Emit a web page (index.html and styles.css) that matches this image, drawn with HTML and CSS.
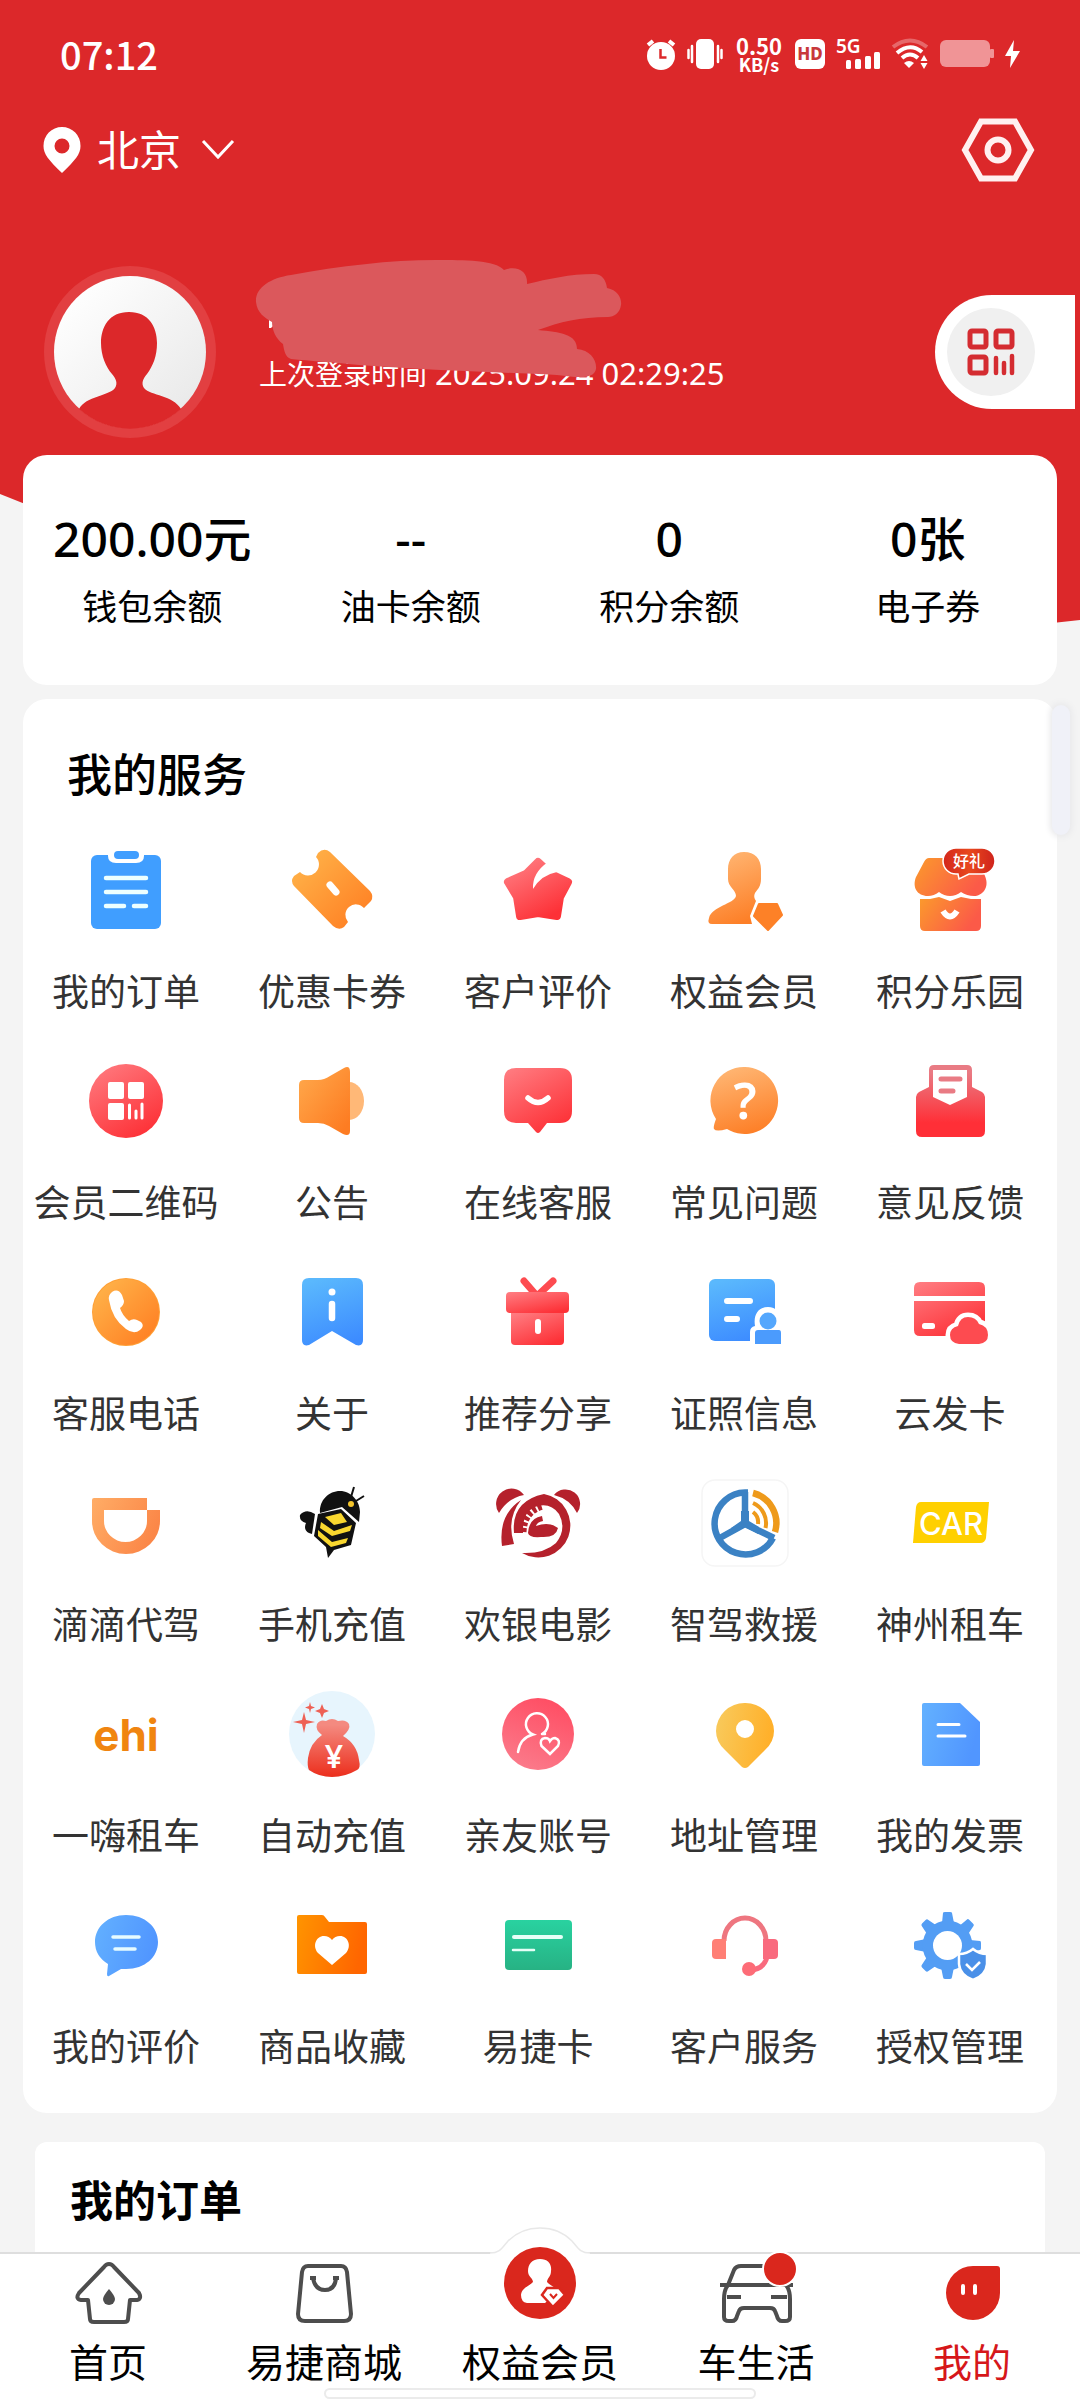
FILE: index.html
```html
<!DOCTYPE html>
<html lang="zh-CN">
<head>
    <meta charset="UTF-8">
    <meta name="viewport" content="width=device-width, initial-scale=1.0">
    <title>我的</title>
    <link rel="stylesheet" href="styles.css">
</head>
<body>
    <!-- Shared gradients for the icons -->
    <svg class="defs" width="0" height="0" aria-hidden="true">
        <defs>
            <linearGradient id="orange" x1="0" y1="0" x2="1" y2="1"><stop offset="0" stop-color="#ffb84d"/><stop offset="1" stop-color="#ff7a1f"/></linearGradient>
            <linearGradient id="peach" x1="0.3" y1="0" x2="0.6" y2="1"><stop offset="0" stop-color="#ffb673"/><stop offset="1" stop-color="#fd7f27"/></linearGradient>
            <linearGradient id="speaker" x1="0" y1="0.2" x2="0.8" y2="1"><stop offset="0" stop-color="#ffa548"/><stop offset="1" stop-color="#fd7c22"/></linearGradient>
            <linearGradient id="red" x1="0.1" y1="0" x2="0.7" y2="1"><stop offset="0" stop-color="#ff7b80"/><stop offset="1" stop-color="#fd3137"/></linearGradient>
            <linearGradient id="shop" x1="0" y1="0" x2="1" y2="0.4"><stop offset="0" stop-color="#fb9a2c"/><stop offset="1" stop-color="#fb5a48"/></linearGradient>
            <linearGradient id="mail" x1="0" y1="0" x2="0" y2="1"><stop offset="0.1" stop-color="#e97b84"/><stop offset="0.8" stop-color="#ff2f37"/></linearGradient>
            <linearGradient id="sky" x1="0.3" y1="0" x2="0.6" y2="1"><stop offset="0" stop-color="#5ab8fd"/><stop offset="1" stop-color="#3d8cff"/></linearGradient>
            <linearGradient id="blue" x1="0" y1="0" x2="1" y2="0.3"><stop offset="0" stop-color="#63b1ff"/><stop offset="1" stop-color="#5196ff"/></linearGradient>
            <linearGradient id="didi" x1="0" y1="0" x2="1" y2="0.4"><stop offset="0" stop-color="#ffad66"/><stop offset="1" stop-color="#fb8748"/></linearGradient>
            <linearGradient id="money" x1="0" y1="0" x2="0" y2="1"><stop offset="0.1" stop-color="#f48a80"/><stop offset="1" stop-color="#ec2e1c"/></linearGradient>
            <linearGradient id="pink" x1="0.7" y1="0" x2="0.3" y2="1"><stop offset="0" stop-color="#ff4d63"/><stop offset="1" stop-color="#fb7b8b"/></linearGradient>
            <linearGradient id="gold" x1="0" y1="0" x2="1" y2="0.2"><stop offset="0" stop-color="#f8cb5e"/><stop offset="1" stop-color="#ffb02a"/></linearGradient>
            <linearGradient id="folder" x1="0" y1="0" x2="1" y2="0.2"><stop offset="0" stop-color="#ff9400"/><stop offset="1" stop-color="#ff6600"/></linearGradient>
            <linearGradient id="green" x1="0" y1="0" x2="0" y2="1"><stop offset="0" stop-color="#29d2a0"/><stop offset="1" stop-color="#27b284"/></linearGradient>
            <linearGradient id="badge" x1="0" y1="0" x2="1" y2="0"><stop offset="0" stop-color="#d3261c"/><stop offset="0.5" stop-color="#e8481d"/><stop offset="1" stop-color="#cf231c"/></linearGradient>
            <linearGradient id="avatar" x1="0" y1="0" x2="1" y2="1"><stop offset="0.1" stop-color="#ffffff"/><stop offset="0.9" stop-color="#e9e9e9"/></linearGradient>
        </defs>
    </svg>

    <div class="app">
        <main class="content">
            <header class="hero">
                <div class="status-bar">
                    <span class="time">07:12</span>
                    <div class="status-icons">
                        <svg width="30" height="32" viewBox="0 0 30 32" fill="#fff"><circle cx="15" cy="18" r="14"/><path d="M2 7 7 3M28 7 23 3" stroke="#fff" stroke-width="4"/><path d="M14.500 11v8.500h6" fill="none" stroke="#dc282a" stroke-width="2.500"/></svg>
                        <svg width="36" height="32" viewBox="0 0 36 32" fill="#fff"><rect x="9" y="1" width="18" height="30" rx="5"/><path d="M5 8v16M31 8v16M1.500 12v8M34.500 12v8" stroke="#fff" stroke-width="2.500" stroke-linecap="round"/></svg>
                        <span class="net-speed"><span>0.50</span><small>KB/s</small></span>
                        <svg width="30" height="30" viewBox="0 0 30 30"><rect width="30" height="30" rx="6" fill="#fff"/><text class="hd" x="15" y="21" text-anchor="middle">HD</text></svg>
                        <svg width="44" height="32" viewBox="0 0 44 32" fill="#fff"><text class="net-type" x="0" y="15">5G</text><rect x="10" y="22" width="5" height="9" rx="1.500"/><rect x="19" y="21" width="6" height="10" rx="1.500"/><rect x="29" y="18" width="6" height="13" rx="1.500"/><rect x="38" y="14" width="6" height="17" rx="1.500"/></svg>
                        <svg width="38" height="32" viewBox="0 0 38 32" fill="none" stroke="#fff" stroke-width="4"><path d="M2 9Q19-4 36 9" opacity="0.300"/><path d="M6 15Q19 4 31 14M11 20Q19 13 27 20"/><path d="M13 25Q18 21 23 25L18 30Z" fill="#fff" stroke="none"/><path d="M33 17l3.500 6h-7ZM33 31l3.500-6h-7Z" fill="#fff" stroke="none"/></svg>
                        <svg width="54" height="28" viewBox="0 0 54 28" fill="#f09496"><rect width="50" height="27" rx="6"/><rect x="50" y="9" width="4" height="9" rx="1"/></svg>
                        <svg width="15" height="28" viewBox="0 0 15 28" fill="#fff"><path d="M9 0 0 16h6L5 28 15 11H8Z"/></svg>
                    </div>
                </div>

                <div class="location-bar">
                    <button class="city" type="button">
                        <svg width="38" height="48" viewBox="0 0 38 48"><path fill="#fff" fill-rule="evenodd" d="M19 1a18.500 18.500 0 0 1 18.500 19c0 8-5 14-18.500 27C5.500 34 .500 28 .500 20A18.500 18.500 0 0 1 19 1Zm0 11.500a7.500 7.500 0 1 0 0 15 7.500 7.500 0 0 0 0-15Z"/></svg>
                        <span>北京</span>
                        <svg width="34" height="22" viewBox="0 0 34 22"><path d="M2 2 17 18 32 2" fill="none" stroke="#fff" stroke-width="3"/></svg>
                    </button>
                    <button class="settings" type="button" aria-label="设置">
                        <svg width="74" height="66" viewBox="0 0 74 66" fill="none" stroke="#fff0f0" stroke-width="6"><path d="M20 4.500H54L70 33 54 61.500H20L4 33Z"/><circle cx="37" cy="33" r="10.500"/></svg>
                    </button>
                </div>

                <div class="profile">
                    <svg class="avatar" width="174" height="174" viewBox="0 0 174 174">
                        <circle cx="87" cy="87" r="86" fill="#e23f41"/>
                        <circle cx="87" cy="87" r="76" fill="url(#avatar)"/>
                        <path fill="#dc282a" d="M86 47C66 47 58 62 58 78c0 13 5 24 11 31 4 5 6 9 3 14-6 8-29 8-36 21A76 76 0 0 0 138 144c-8-14-30-13-37-21-3-5-1-9 3-14 6-8 10-18 10-31 0-16-8-31-28-31Z"/>
                    </svg>
                    <div class="login-info">
                        <p class="last-login"><span>上次登录时间</span><time>2025.09.24 02:29:25</time></p>
                        <svg class="name-mask" width="366" height="120" viewBox="256 258 366 120">
                            <path fill="#fff" d="M269 318h3l2 5-3 3h-2Z"/>
                            <path fill="#db585c" d="M256 300C255 286 270 276 291 273C340 264 390 258 436 258C465 258 495 258 504 268C518 263 528 270 527 282C548 277 570 272 594 272C602 272 606 278 607 286C618 288 622 297 621 303C620 311 614 315 608 315C580 315 560 320 538 328C560 330 577 332 577 347C590 348 597 358 596 367C594 377 580 376 557 373C500 370 440 369 359 363C330 360 310 359 291 357C285 355 284 348 283 342C276 337 272 328 272 320C265 316 257 311 256 300Z"/>
                        </svg>
                    </div>
                    <button class="qr-button" type="button" aria-label="二维码">
                        <span class="qr-circle">
                            <svg width="48" height="48" viewBox="0 0 48 48" fill="none" stroke="#d42c31" stroke-width="5"><rect x="3" y="3" width="16" height="16" rx="2"/><rect x="29" y="3" width="16" height="16" rx="2"/><rect x="3" y="29" width="16" height="16" rx="2"/><path d="M29 30v15M37 35v10M45 28v17" stroke-linecap="round" stroke-width="4.500"/></svg>
                        </span>
                    </button>
                </div>
            </header>

            <section class="card assets">
                <a href="#"><strong>200.00元</strong><span>钱包余额</span></a>
                <a href="#"><strong>--</strong><span>油卡余额</span></a>
                <a href="#"><strong>0</strong><span>积分余额</span></a>
                <a href="#"><strong>0张</strong><span>电子券</span></a>
            </section>

            <section class="card services">
                <h2>我的服务</h2>
                <div class="service-grid">
                    <a href="#" class="service">
                        <svg viewBox="0 0 96 96"><rect x="13" y="13" width="70" height="74" rx="6" fill="#409eff"/><path d="M30 10v4q0 7 8 7h20q8 0 8-7v-4Z" fill="#fff"/><rect x="36" y="9" width="25" height="8" rx="4" fill="#409eff"/><path d="M28 36H68M28 50H68M28 64H46M56 64H68" stroke="#ecffff" stroke-width="4.500" stroke-linecap="round"/></svg>
                        <span>我的订单</span>
                    </a>
                    <a href="#" class="service">
                        <svg viewBox="0 0 96 96"><path fill="url(#orange)" d="M34 11Q40 5 46 10L86 49Q90 54 87 59L80 66A10.500 10.500 0 0 0 64 80L60 85Q55 89 49 84L10 44Q6 39 10 34L16 30A10.500 10.500 0 1 0 32 15Z"/><path d="M46 43l6 7" stroke="#fff" stroke-width="7" stroke-linecap="round"/></svg>
                        <span>优惠卡券</span>
                    </a>
                    <a href="#" class="service">
                        <svg viewBox="0 0 96 96"><path fill="url(#red)" stroke="url(#red)" stroke-width="8" stroke-linejoin="round" d="M48 20 61 32 78 40 70 55 67 74 48 71 30 74 27 55 18 40 36 32Z"/><path fill="#fff" d="M58 20 67 30Q51 33 43 47Q42 31 58 20Z"/></svg>
                        <span>客户评价</span>
                    </a>
                    <a href="#" class="service">
                        <svg viewBox="0 0 96 96"><path fill="url(#peach)" d="M48 10c11 0 17 7 17 17v10c0 7-3 10-6 14q-2 4 1 8l-6 15 2 8H16q-5 0-3-6c3-12 25-14 27-22 0-6-8-9-8-17V27c0-10 6-17 16-17Z"/><path fill="#fd8127" stroke="#fd8127" stroke-width="2" stroke-linejoin="round" d="M63 62H81L86 73 72 88 58 74Z"/></svg>
                        <span>权益会员</span>
                    </a>
                    <a href="#" class="service">
                        <svg viewBox="0 0 96 96"><path fill="url(#shop)" d="M27 16H72Q75 16 77 19L83 34C88 46 80 54 72 54Q65 54 59 50 54 54 48 54 42 54 37 50 32 54 26 54C15 54 10 45 14 35L22 20Q24 16 27 16Z"/><path fill="url(#shop)" d="M18 57h10l9-2 11 4 11-4 10 2h10v27q0 5-5 5H23q-5 0-5-5Z"/><path d="M41 69q7 11 14 0" fill="none" stroke="#fff" stroke-width="6"/><path fill="url(#badge)" stroke="#fff" stroke-width="1.500" d="M54 6H80A12 12 0 0 1 80 32H67L57 37 56 32H54A12 12 0 0 1 54 6Z"/><text class="gift-text" x="67" y="25" text-anchor="middle">好礼</text></svg>
                        <span>积分乐园</span>
                    </a>

                    <a href="#" class="service">
                        <svg viewBox="0 0 96 96"><circle cx="48" cy="48" r="37" fill="url(#red)"/><g fill="#fff"><rect x="30" y="29" width="16" height="17" rx="2"/><rect x="50" y="29" width="16" height="17" rx="2"/><rect x="30" y="50" width="16" height="17" rx="2"/></g><path d="M51.500 52v13M58 58v7M64 51v14" stroke="#fff" stroke-width="3" stroke-linecap="round"/></svg>
                        <span>会员二维码</span>
                    </a>
                    <a href="#" class="service">
                        <svg viewBox="0 0 96 96"><ellipse cx="65" cy="48" rx="15" ry="19" fill="#ffb877"/><path fill="url(#speaker)" d="M20 27H34Q40 27 46 23L60 15Q66 12 66 19V78Q66 84 59 81L45 73Q40 70 34 70H20Q15 70 15 65V32Q15 27 20 27Z"/></svg>
                        <span>公告</span>
                    </a>
                    <a href="#" class="service">
                        <svg viewBox="0 0 96 96"><path fill="url(#red)" d="M26 15H70Q82 15 82 27V58Q82 70 70 70H57L50 79Q48 81 46 79L38 70H26Q14 70 14 58V27Q14 15 26 15Z"/><path d="M38 45q10 9 20 0" fill="none" stroke="#fff" stroke-width="5.500" stroke-linecap="round"/></svg>
                        <span>在线客服</span>
                    </a>
                    <a href="#" class="service">
                        <svg viewBox="0 0 96 96"><path fill="url(#peach)" d="M49 14A33.500 33.500 0 1 1 31 76Q20 79 18 76 17 74 20 66A33.500 33.500 0 0 1 49 14Z"/><text class="question" x="49" y="66" text-anchor="middle">?</text></svg>
                        <span>常见问题</span>
                    </a>
                    <a href="#" class="service">
                        <svg viewBox="0 0 96 96"><path fill="url(#mail)" d="M32 12H65Q70 12 70 17V34L80 39Q83 41 83 44V78Q83 84 77 84H20Q14 84 14 78V44Q14 41 17 39L27 34V17Q27 12 32 12Z"/><path fill="#fff" d="M31 17H65V44L48 52 31 44Z"/><path d="M39 26H58M39 38H51" stroke="#e97b84" stroke-width="5" stroke-linecap="round"/></svg>
                        <span>意见反馈</span>
                    </a>

                    <a href="#" class="service">
                        <svg viewBox="0 0 96 96"><circle cx="48" cy="48" r="34" fill="#ff9f34"/><circle cx="48" cy="48" r="33" fill="url(#orange)"/><path fill="#fff" d="M34 28Q40 24 44 31L46 37Q46 41 42 44 44 51 51 57 55 54 59 56L63 58Q67 62 62 66 56 71 48 65 34 55 31 36 30 31 34 28Z"/></svg>
                        <span>客服电话</span>
                    </a>
                    <a href="#" class="service">
                        <svg viewBox="0 0 96 96"><path fill="url(#sky)" d="M25 14H72Q79 14 79 21V76Q79 83 72 81L48 67 25 81Q18 83 18 76V21Q18 14 25 14Z"/><circle cx="48" cy="28" r="3.500" fill="#fff"/><path d="M48 40V54" stroke="#fff" stroke-width="6.500" stroke-linecap="round"/></svg>
                        <span>关于</span>
                    </a>
                    <a href="#" class="service">
                        <svg viewBox="0 0 96 96"><path d="M34 17 47 32 63 17" fill="none" stroke="#fd4b50" stroke-width="7" stroke-linecap="round"/><path fill="url(#red)" d="M21 49H74V77Q74 81 70 81H25Q21 81 21 77Z"/><rect x="16" y="28" width="63" height="21" rx="4" fill="url(#red)"/><path d="M48 58v9" stroke="#fff" stroke-width="6" stroke-linecap="round"/></svg>
                        <span>推荐分享</span>
                    </a>
                    <a href="#" class="service">
                        <svg viewBox="0 0 96 96"><rect x="13" y="15" width="66" height="62" rx="6" fill="url(#sky)"/><path fill="#fff" d="M54 82V68Q54 63 59 62C57 50 63 43 72 43S87 50 85 62L90 70V85H54Z"/><circle cx="72" cy="57" r="8.500" fill="#54a7fd"/><path fill="#4b9bfd" d="M62 66H83Q85 66 85 69V80H59V69Q59 66 62 66Z"/><path d="M31 37H54M31 55H41" stroke="#fff" stroke-width="6" stroke-linecap="round"/></svg>
                        <span>证照信息</span>
                    </a>
                    <a href="#" class="service">
                        <svg viewBox="0 0 96 96"><path fill="url(#red)" d="M18 18H77Q83 18 83 24V72H18Q12 72 12 66V24Q12 18 18 18Z"/><path d="M12 34.500H83" stroke="#fff" stroke-width="5"/><rect x="20" y="59" width="13" height="6" rx="2.500" fill="#fff"/><path fill="#fd4b50" stroke="#fff" stroke-width="9" paint-order="stroke" d="M57 80Q48 79 48 71 48 64 56 62 58 53 66 53 74 53 77 60 86 62 86 71 86 79 77 80Z"/></svg>
                        <span>云发卡</span>
                    </a>

                    <a href="#" class="service">
                        <svg viewBox="0 0 96 96"><path fill="url(#didi)" fill-rule="evenodd" d="M16 23H69V35H82V46A34 33 0 0 1 14 46V25Q14 23 16 23ZM26 35V46A21.500 21 0 0 0 69 46V35Z"/></svg>
                        <span>滴滴代驾</span>
                    </a>
                    <a href="#" class="service">
                        <svg viewBox="0 0 96 96"><g fill="#111"><path d="M36 38C35 25 45 16 56 16S76 26 76 37L75 47 58 32Z"/><path d="M31 39Q22 33 16 40 15 46 22 48 19 55 25 58L28 59Z"/><path d="M57 34 72 48 67 70 50 75 44 83 42 72 30 61 34 39Z"/></g><path d="M67 22 70 12M72 26 80 21" stroke="#111" stroke-width="2"/><circle cx="67" cy="29" r="3" fill="#f5c52b"/><path fill="#f9d72f" d="M41 42 57 38 63 47 50 50ZM37 47 50 56 68 50 66 56 48 61 36 53ZM34 55 48 67 64 63 62 68 47 72 34 61Z"/></svg>
                        <span>手机充值</span>
                    </a>
                    <a href="#" class="service">
                        <svg viewBox="0 0 96 96" fill="#b5212c"><path d="M34 20A14 14 0 1 0 9 38Q18 23 34 20ZM64 20A14 14 0 1 1 87 38Q80 24 64 20Z"/><path d="M31 25Q8 40 12 71L24 69Q16 44 31 25Z"/><path fill-rule="evenodd" d="M54 19A32 32 0 1 1 32 78Q54 79 66 68 77 54 69 39 61 28 48 31 32 35 33 58L24 58Q21 26 54 19Z"/><path d="M33 57Q34 36 53 31" fill="none" stroke="#b5212c" stroke-width="7" stroke-dasharray="4 2"/><path d="M38 58Q39 43 52 41L53 46Q47 47 46 51 59 46 68 53 66 63 51 62 39 63 38 58Z"/></svg>
                        <span>欢银电影</span>
                    </a>
                    <a href="#" class="service">
                        <svg viewBox="0 0 96 96"><rect x="6" y="5" width="86" height="86" rx="13" fill="#fff" stroke="#f5f5f5" stroke-width="1.500"/><g fill="none" stroke="#3b82c4" stroke-width="6.500"><path d="M52 17.500H49A31 31 0 1 0 77 63"/><path d="M49 17V49L22 64M49 49 78 63"/></g><path fill="#3b82c4" d="M45 36V46L35 53 38 58 49 52 62 59 63 52 53 46V36Z"/><g fill="none" stroke="#ee9a1b"><path d="M57 18A31 31 0 0 1 79 57" stroke-width="6.500"/><path d="M57 28A22 22 0 0 1 69.500 53M57 37A13 13 0 0 1 62 49" stroke-width="4"/></g></svg>
                        <span>智驾救援</span>
                    </a>
                    <a href="#" class="service">
                        <svg viewBox="0 0 96 96"><path fill="#ffd000" d="M19 27H87L84 63Q83 68 78 68H11L14 32Q15 27 19 27Z"/><text class="car-text" x="49" y="60" text-anchor="middle">CAR</text></svg>
                        <span>神州租车</span>
                    </a>

                    <a href="#" class="service">
                        <svg viewBox="0 0 96 96"><text class="ehi-text" x="48" y="65" text-anchor="middle">ehi</text></svg>
                        <span>一嗨租车</span>
                    </a>
                    <a href="#" class="service">
                        <svg viewBox="0 0 96 96"><circle cx="48" cy="48" r="43" fill="#e7f5fd"/><path fill="url(#money)" d="M38 49Q31 44 33 38 36 33 42 35 48 31 54 35 62 33 65 38 67 43 59 50 73 58 75 74 77 82 73 84 61 91 48 91T25 84Q23 80 24 72 26 57 38 49Z"/><path fill="#ee6155" d="M20 26 22 34 31 36 22 38 20 47 18 38 9 36 18 34ZM38 18 40 23 45 25 40 27 38 32 36 27 31 25 36 23ZM26 16 27 20 31 21.500 27 23 26 27 25 23 21 21.500 25 20Z"/><text class="yuan" x="50" y="82" text-anchor="middle">¥</text></svg>
                        <span>自动充值</span>
                    </a>
                    <a href="#" class="service">
                        <svg viewBox="0 0 96 96"><circle cx="48" cy="48" r="36" fill="url(#pink)"/><g fill="none" stroke="#fff" stroke-width="2.500" stroke-linecap="round"><path d="M52 48A11 11 0 1 0 43 48.500Q30 52 28 66M52 48H55"/><path d="M60 68 51.500 60Q49 53 55 52 59 52 60 55 62 52 65 52 71 54 68 60Z"/></g></svg>
                        <span>亲友账号</span>
                    </a>
                    <a href="#" class="service">
                        <svg viewBox="0 0 96 96"><path fill="url(#gold)" fill-rule="evenodd" d="M49 17A28.500 28.500 0 0 1 78 45Q78 56 69 64L52 81Q49 83 46 81L29 64Q20 56 20 45A28.500 28.500 0 0 1 49 17ZM49 34A9 9 0 1 0 49 52 9 9 0 0 0 49 34Z"/></svg>
                        <span>地址管理</span>
                    </a>
                    <a href="#" class="service">
                        <svg viewBox="0 0 96 96"><path fill="url(#blue)" d="M22 17H58L78 36V78Q78 80 76 80H22Q20 80 20 78V19Q20 17 22 17Z"/><path d="M36 38.500H57M36 50H63" stroke="#fff" stroke-width="3" stroke-linecap="round"/></svg>
                        <span>我的发票</span>
                    </a>

                    <a href="#" class="service">
                        <svg viewBox="0 0 96 96"><path fill="url(#blue)" d="M48 18C67 18 80 30 80 45S67 72 48 72H43L31 79Q29 80 29 77L30 67Q17 59 17 45C17 30 30 18 48 18Z"/><path d="M35 40H61M37 52H57" stroke="#e6fbff" stroke-width="3.500" stroke-linecap="round"/></svg>
                        <span>我的评价</span>
                    </a>
                    <a href="#" class="service">
                        <svg viewBox="0 0 96 96"><path fill="url(#folder)" d="M15 18H38Q40 18 41 20L45 25H81Q83 25 83 27V75Q83 77 81 77H15Q13 77 13 75V20Q13 18 15 18Z"/><path fill="#fff" d="M48 68 34 56C28 49 32 39 40 39Q45 39 48 43 51 39 56 39C64 39 68 49 62 56Z"/></svg>
                        <span>商品收藏</span>
                    </a>
                    <a href="#" class="service">
                        <svg viewBox="0 0 96 96"><rect x="15" y="23" width="67" height="50" rx="4" fill="url(#green)"/><path d="M24 40H71" stroke="#e6fff7" stroke-width="4" stroke-linecap="round"/><path d="M23 53H44" stroke="#e6fff7" stroke-width="2.500" stroke-linecap="round"/></svg>
                        <span>易捷卡</span>
                    </a>
                    <a href="#" class="service">
                        <svg viewBox="0 0 96 96"><path d="M28 44A21 23 0 0 1 70 44" fill="none" stroke="#ee7680" stroke-width="5"/><path fill="#ff7f75" d="M20 42H30V62H20Q16 62 16 58V46Q16 42 20 42Z"/><path fill="#f96a7e" d="M67 42H78Q82 42 82 46V58Q82 62 78 62H67Z"/><path d="M71 60Q68 72 55 73" fill="none" stroke="#f96a7e" stroke-width="5"/><circle cx="53" cy="72" r="7" fill="#fd6c77"/></svg>
                        <span>客户服务</span>
                    </a>
                    <a href="#" class="service">
                        <svg viewBox="0 0 96 96"><g fill="#539df4"><path id="teeth" d="M40 26 41 16Q41 15 43 15H48Q50 15 50 16L52 26V70L50 80Q50 82 48 82H43Q41 82 41 80L39 70Z"/><use href="#teeth" transform="rotate(45 45.500 48.500)"/><use href="#teeth" transform="rotate(90 45.500 48.500)"/><use href="#teeth" transform="rotate(135 45.500 48.500)"/><circle cx="45.500" cy="48.500" r="25"/></g><circle cx="45.500" cy="48.500" r="14.500" fill="#fff"/><path fill="#4a90e8" stroke="#fff" stroke-width="2.500" d="M71 52Q77 57 85 57V67Q84 78 71 83 58 78 57 67V57Q65 57 71 52Z"/><path d="M64 67 70 73 78 65" fill="none" stroke="#fff" stroke-width="2.500"/></svg>
                        <span>授权管理</span>
                    </a>
                </div>
                <div class="side-handle"></div>
            </section>

            <section class="orders">
                <h2>我的订单</h2>
            </section>
        </main>

        <nav class="tab-bar">
            <a href="#" class="tab">
                <svg width="80" height="64" viewBox="0 0 80 64" fill="none" stroke="#4d4d4d" stroke-width="4"><path stroke-linejoin="round" d="M41 3Q44 3 46 6L71 32Q74 38 69 39H62L60 58Q60 61 56 61H26Q22 61 22 58L20 39H13Q7 38 11 32L36 6Q38 3 41 3Z"/><path fill="#4d4d4d" stroke="none" d="M41 28Q47 35 47 38A6 6 0 0 1 35 38Q35 35 41 28Z"/></svg>
                <span>首页</span>
            </a>
            <a href="#" class="tab">
                <svg width="80" height="64" viewBox="0 0 80 64" fill="none" stroke="#4d4d4d" stroke-width="4"><path d="M24 5H57Q62 5 63 11L67 53Q67 60 60 60H21Q14 60 14 53L18 11Q19 5 24 5Z"/><path d="M29 17Q31 29 41 29T52 17M26 17H32M49 17H55"/></svg>
                <span>易捷商城</span>
            </a>
            <a href="#" class="tab">
                <svg class="member-icon" width="100" height="100" viewBox="0 0 100 100"><path fill="#fff" d="M0 26C10 26 12 21 18 14Q31 1 50 1T82 14C88 21 90 26 100 26V32H0Z"/><path fill="none" stroke="#e8e8e8" stroke-width="1.500" d="M0 26C10 26 12 21 18 14Q31 1 50 1T82 14C88 21 90 26 100 26"/><circle cx="50" cy="56" r="36" fill="#da271d"/><path fill="#fff" d="M50 32C58 32 62 37 61 44 61 50 57 51 57 55 60 59 66 60 69 64L55 76H37Q31 75 31 68C32 60 40 59 43 55 43 51 38 50 38 44 38 37 42 32 50 32Z"/><path fill="#fff" stroke="#da271d" stroke-width="2.500" d="M57 61H69L75 68 63 80 52 68Z"/><path d="M60 67 63.500 71 67 67" fill="none" stroke="#da271d" stroke-width="2"/></svg>
                <span>权益会员</span>
            </a>
            <a href="#" class="tab">
                <svg width="80" height="64" viewBox="0 0 80 64" fill="none" stroke="#4d4d4d" stroke-width="4"><path d="M50 5H25Q20 5 18 9L12 24Q8 29 8 38V56Q8 60 13 60H16Q20 60 21 55L23 50Q24 47 28 47H54Q58 47 59 50L61 55Q62 60 66 60H69Q74 60 74 56V38Q74 29 70 24M4 24H77M11 36H25M55 36H71"/><circle cx="64" cy="8" r="17" fill="#da271d" stroke="#fff" stroke-width="2"/></svg>
                <span>车生活</span>
            </a>
            <a href="#" class="tab active">
                <svg width="80" height="64" viewBox="0 0 80 64"><path fill="#da271d" d="M41 5H65Q68 5 68 8V32A27 27 0 0 1 14 32A27 27 0 0 1 41 5Z"/><path d="M31 25V32M43 25V32" stroke="#fff" stroke-width="4" stroke-linecap="round"/></svg>
                <span>我的</span>
            </a>
            <div class="home-indicator"></div>
        </nav>
    </div>
</body>
</html>
```

FILE: styles.css
```css
* {
    box-sizing: border-box;
}
body {
    margin: 0;
    background-color: #f4f4f4;
    color: #000;
    font-family: "Noto Sans", "Noto Sans CJK SC", sans-serif;
}
h2, p {
    margin: 0;
}
a {
    color: inherit;
    text-decoration: none;
}
button {
    border: none;
    padding: 0;
    background: none;
    color: inherit;
    font: inherit;
    cursor: pointer;
}
svg {
    display: block;
    flex-shrink: 0;
    overflow: visible;
}
.defs {
    position: absolute;
}
.app {
    display: flex;
    flex-direction: column;
    min-height: 100vh;
}
.content {
    position: relative;
    flex: 1;
    display: flex;
    flex-direction: column;
}
/* red backdrop with a slanted lower edge */
.content::before {
    content: "";
    position: absolute;
    top: 0;
    left: 0;
    right: 0;
    height: 640px;
    z-index: -1;
    background-color: #dc282a;
    clip-path: polygon(0 0, 100% 0, 100% 620px, 90% 632px, 60% 632px, 20% 580px, 0 494px);
}

/* header */
.hero {
    color: #fff;
    padding-bottom: 16px;
}
.status-bar {
    display: flex;
    align-items: center;
    justify-content: space-between;
    height: 108px;
    padding: 0 60px;
}
.time {
    font-family: "Noto Sans CJK SC", sans-serif;
    font-size: 38px;
    font-weight: 500;
    line-height: 40px;
}
.status-icons {
    display: flex;
    align-items: center;
    gap: 11px;
}
.net-speed {
    display: flex;
    flex-direction: column;
    align-items: center;
    width: 50px;
    font-family: "Noto Sans CJK SC", sans-serif;
    font-size: 22px;
    font-weight: 700;
    line-height: 20px;
}
.net-speed small {
    font-size: 18px;
    line-height: 18px;
}
.hd {
    font-size: 17px;
    font-weight: 800;
    fill: #c8383a;
}
.net-type {
    font-size: 19px;
    font-weight: 600;
}
.location-bar {
    display: flex;
    align-items: center;
    justify-content: space-between;
    height: 84px;
    padding: 0 45px 0 43px;
}
.city {
    display: flex;
    align-items: center;
    gap: 16px;
    font-size: 42px;
    line-height: 48px;
}
.city span {
    margin-right: 4px;
}
.profile {
    display: flex;
    align-items: center;
    padding: 73px 5px 0 43px;
}
.login-info {
    position: relative;
    flex: 1;
    margin-left: 42px;
    padding-top: 42px;
}
.last-login {
    display: flex;
    align-items: baseline;
    gap: 8px;
    font-size: 28px;
    line-height: 40px;
    white-space: nowrap;
}
.last-login time {
    font-size: 31px;
}
/* brush stroke lying over the user name */
.name-mask {
    position: absolute;
    left: -3px;
    bottom: 14px;
}
.qr-button {
    width: 140px;
    height: 114px;
    padding-left: 12px;
    border-radius: 57px 0 0 57px;
    background-color: #fff;
}
.qr-circle {
    display: flex;
    align-items: center;
    justify-content: center;
    width: 88px;
    height: 88px;
    border-radius: 50%;
    background-color: #f0f0f0;
}

/* cards */
.card {
    margin: 0 23px 14px;
    border-radius: 24px;
    background-color: #fff;
}
.assets {
    display: grid;
    grid-template-columns: repeat(4, 1fr);
    padding: 56px 0 54px;
}
.assets a {
    display: flex;
    flex-direction: column;
    align-items: center;
    gap: 16px;
}
.assets strong {
    font-size: 48px;
    font-weight: 500;
    line-height: 56px;
}
.assets span {
    font-size: 35px;
    line-height: 48px;
}
.services {
    position: relative;
    padding: 48px 0 42px;
    margin-bottom: 29px;
}
.services h2 {
    padding-left: 44px;
    font-size: 45px;
    font-weight: 500;
    line-height: 56px;
}
.service-grid {
    display: grid;
    grid-template-columns: repeat(5, 1fr);
    row-gap: 37px;
    margin-top: 39px;
    padding-right: 4px;
}
.service {
    display: flex;
    flex-direction: column;
    align-items: center;
    gap: 30px;
    color: #333;
    font-size: 37px;
    line-height: 48px;
    white-space: nowrap;
}
.service svg {
    width: 96px;
    height: 96px;
}
.gift-text {
    font-size: 16px;
    font-weight: 500;
    fill: #fff;
}
.question {
    font-size: 50px;
    font-weight: 600;
    fill: #fff;
}
.car-text {
    font-family: Inter, sans-serif;
    font-size: 31px;
    font-weight: 500;
    fill: #fff;
}
.ehi-text {
    font-family: Inter, sans-serif;
    font-size: 44px;
    font-weight: 700;
    fill: #f08510;
}
.yuan {
    font-size: 32px;
    font-weight: 600;
    fill: #fff;
}
.side-handle {
    position: absolute;
    top: 6px;
    right: -13px;
    width: 18px;
    height: 130px;
    border-radius: 9px;
    background-color: #f0f1f8;
    box-shadow: 0 0 6px 2px #e8e8ea;
}
.orders {
    flex: 1;
    margin: 0 35px;
    padding: 31px 35px 23px;
    border-radius: 12px 12px 0 0;
    background-color: #fff;
}
.orders h2 {
    font-size: 43px;
    font-weight: 700;
    line-height: 56px;
}

/* bottom tabs */
.tab-bar {
    position: relative;
    display: grid;
    grid-template-columns: repeat(5, 1fr);
    height: 148px;
    border-top: 2px solid #dedede;
    background-color: #fff;
}
.tab {
    position: relative;
    display: flex;
    flex-direction: column;
    align-items: center;
    justify-content: flex-end;
    gap: 15px;
    padding-bottom: 16px;
    font-size: 39px;
    line-height: 44px;
}
.tab.active {
    color: #d6171a;
}
.member-icon {
    position: absolute;
    top: -27px;
    left: 50%;
    transform: translateX(-50%);
}
.home-indicator {
    position: absolute;
    left: 30%;
    right: 30%;
    bottom: 1px;
    height: 11px;
    border: 2px solid #ebebeb;
    border-radius: 6px;
    background-color: #fff;
}
```
